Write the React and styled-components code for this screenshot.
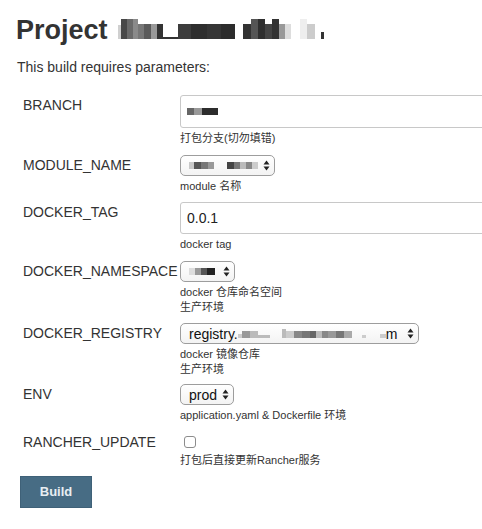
import React from "react";
import styled, { createGlobalStyle } from "styled-components";

const Global = createGlobalStyle`
  html, body {
    margin: 0;
    padding: 0;
    background: #fff;
    overflow: hidden;
  }
  body {
    font-family: "Liberation Sans", Arial, "Noto Sans CJK SC", sans-serif;
    color: #333;
  }
`;

const Page = styled.div`
  padding: 14px 0 0 17px;
  overflow: hidden;
`;

const Title = styled.h1`
  display: flex;
  align-items: baseline;
  gap: 10px;
  margin: 0 0 13px -1px;
  font-size: 27px;
  line-height: 32px;
  font-weight: bold;
  color: #333;
`;

const Intro = styled.p`
  margin: 0 0 20px;
  font-size: 14px;
  line-height: 16px;
`;

const Params = styled.div`
  padding-left: 6px;
`;

const Row = styled.div`
  display: grid;
  grid-template-columns: 157px 1fr;
  padding-bottom: ${(p) => p.$gap ?? 8.5}px;
`;

const Label = styled.div`
  font-size: 14px;
  line-height: 16px;
  padding-top: 2px;
  color: #333;
  white-space: nowrap;
`;

const Field = styled.div`
  display: flex;
  flex-direction: column;
  align-items: flex-start;
  min-width: 0;
`;

const TextInput = styled.div`
  box-sizing: border-box;
  width: 330px;
  height: ${(p) => p.$h}px;
  border: 1px solid #c8c8c8;
  border-radius: 3px;
  display: flex;
  align-items: center;
  padding-left: 6px;
  font-size: 14px;
  color: #222;
`;

const Select = styled.div`
  box-sizing: border-box;
  width: ${(p) => p.$w}px;
  height: 21px;
  border: 1px solid #9d9d9d;
  border-radius: 5px;
  background: linear-gradient(#ffffff, #f3f3f3);
  display: flex;
  align-items: center;
  justify-content: space-between;
  padding: 0 4px 0 8px;
  font-size: 14px;
  color: #111;
  overflow: hidden;
`;

const SelectText = styled.span`
  display: flex;
  align-items: center;
  white-space: nowrap;
`;

const Hint = styled.div`
  margin-top: 3px;
  font-size: 11px;
  line-height: 15px;
  color: #333;
  white-space: nowrap;
`;

const Checkbox = styled.span`
  display: block;
  box-sizing: border-box;
  width: 12px;
  height: 12px;
  margin: 4px 0 2px 4px;
  border: 1px solid #8c8c8c;
  border-radius: 3px;
  background: #fff;
`;

const Mosaic = styled.span`
  display: inline-flex;
  align-items: flex-end;
`;

const Block = styled.span`
  display: block;
  width: ${(p) => p.$w}px;
  height: ${(p) => p.$h}px;
  background: ${(p) => p.$c};
`;

const BuildButton = styled.button`
  margin: 0 0 0 3px;
  width: 72px;
  height: 32px;
  background: #476c84;
  border: 1px solid #3f6178;
  color: #e8eef2;
  font-family: "Liberation Sans", Arial, sans-serif;
  font-weight: bold;
  font-size: 13px;
  padding: 0;
`;

function Arrows() {
  return (
    <svg width="7" height="11" viewBox="0 0 7 11">
      <path d="M3.5 0.5 L6.5 4.5 L0.5 4.5 Z" fill="#222" />
      <path d="M3.5 10.5 L6.5 6.5 L0.5 6.5 Z" fill="#222" />
    </svg>
  );
}

function Blur({ blocks }) {
  return (
    <Mosaic>
      {blocks.map(([w, h, c], i) => (
        <Block key={i} $w={w} $h={h} $c={c} />
      ))}
    </Mosaic>
  );
}

const titleBlocks = [
  [3, 14, "#d0d0d0"],
  [6, 20, "#484848"],
  [6, 20, "#6a6a6a"],
  [5, 20, "#8a8a8a"],
  [6, 15, "#777"],
  [7, 15, "#5a5a5a"],
  [6, 15, "#999"],
  [6, 15, "#333"],
  [15, 2, "#333"],
  [13, 15, "#3c3c3c"],
  [16, 15, "#2e2e2e"],
  [14, 15, "#353535"],
  [14, 15, "#2c2c2c"],
  [8, 0, "transparent"],
  [8, 15, "#333"],
  [7, 20, "#555"],
  [7, 20, "#2f2f2f"],
  [7, 15, "#444"],
  [7, 20, "#333"],
  [6, 15, "#999"],
  [6, 15, "#ddd"],
  [9, 0, "transparent"],
  [7, 20, "#eee"],
  [8, 15, "#ccc"],
  [6, 0, "transparent"],
  [3, 7, "#333"],
];

const branchBlocks = [
  [7, 7, "#666"],
  [8, 7, "#999"],
  [16, 7, "#2c2c2c"],
];

const moduleBlocks = [
  [5, 7, "#c8c8c8"],
  [7, 7, "#555"],
  [7, 7, "#777"],
  [6, 7, "#999"],
  [13, 0, "transparent"],
  [7, 7, "#444"],
  [6, 7, "#777"],
  [6, 7, "#bbb"],
  [6, 7, "#888"],
  [6, 7, "#ccc"],
];

const namespaceBlocks = [
  [6, 7, "#ddd"],
  [6, 7, "#999"],
  [6, 7, "#555"],
  [8, 7, "#222"],
];

const registryBlocks = [
  [4, 4, "#ccc"],
  [8, 7, "#999"],
  [8, 7, "#bbb"],
  [12, 3, "#bbb"],
  [12, 0, "transparent"],
  [4, 9, "#bbb"],
  [8, 7, "#ccc"],
  [8, 7, "#888"],
  [8, 7, "#777"],
  [6, 7, "#666"],
  [6, 7, "#bbb"],
  [6, 7, "#888"],
  [8, 7, "#999"],
  [8, 7, "#777"],
  [8, 7, "#aaa"],
  [10, 0, "transparent"],
  [4, 3, "#ccc"],
  [14, 0, "transparent"],
  [6, 4, "#ccc"],
];

export default function App() {
  return (
    <Page>
      <Global />
      <Title>
        <span>Project</span>
        <Blur blocks={titleBlocks} />
      </Title>
      <Intro>This build requires parameters:</Intro>
      <Params>
        <Row>
          <Label>BRANCH</Label>
          <Field>
            <TextInput $h={33}>
              <Blur blocks={branchBlocks} />
            </TextInput>
            <Hint>打包分支(切勿填错)</Hint>
          </Field>
        </Row>
        <Row>
          <Label>MODULE_NAME</Label>
          <Field>
            <Select $w={95}>
              <SelectText>
                <Blur blocks={moduleBlocks} />
              </SelectText>
              <Arrows />
            </Select>
            <Hint>module 名称</Hint>
          </Field>
        </Row>
        <Row>
          <Label>DOCKER_TAG</Label>
          <Field>
            <TextInput $h={32}>0.0.1</TextInput>
            <Hint>docker tag</Hint>
          </Field>
        </Row>
        <Row>
          <Label>DOCKER_NAMESPACE</Label>
          <Field>
            <Select $w={55}>
              <SelectText>
                <Blur blocks={namespaceBlocks} />
              </SelectText>
              <Arrows />
            </Select>
            <Hint>
              docker 仓库命名空间
              <br />
              生产环境
            </Hint>
          </Field>
        </Row>
        <Row $gap={7}>
          <Label>DOCKER_REGISTRY</Label>
          <Field>
            <Select $w={239}>
              <SelectText>
                registry.
                <Blur blocks={registryBlocks} />
                m
              </SelectText>
              <Arrows />
            </Select>
            <Hint>
              docker 镜像仓库
              <br />
              生产环境
            </Hint>
          </Field>
        </Row>
        <Row>
          <Label>ENV</Label>
          <Field>
            <Select $w={54}>
              <SelectText>prod</SelectText>
              <Arrows />
            </Select>
            <Hint>application.yaml &amp; Dockerfile 环境</Hint>
          </Field>
        </Row>
        <Row $gap={8}>
          <Label>RANCHER_UPDATE</Label>
          <Field>
            <Checkbox />
            <Hint>打包后直接更新Rancher服务</Hint>
          </Field>
        </Row>
      </Params>
      <BuildButton>Build</BuildButton>
    </Page>
  );
}
